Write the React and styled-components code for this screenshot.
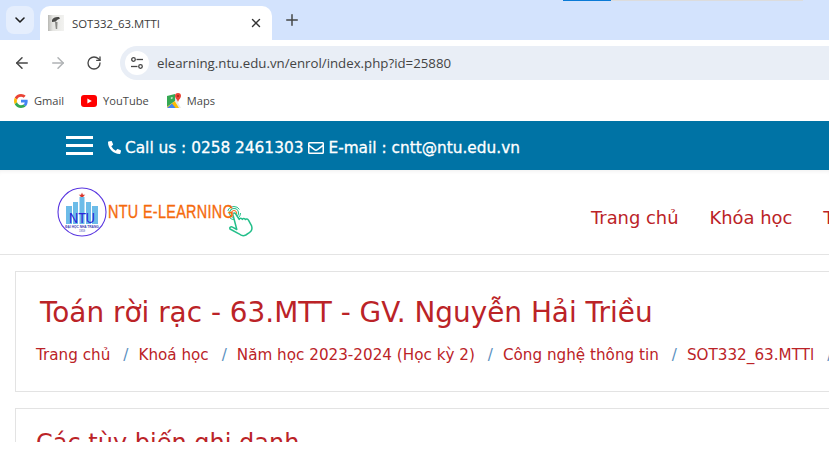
import React from 'react'
import styled, { createGlobalStyle } from 'styled-components'
import { ChevronDown, X, Plus, ArrowLeft, ArrowRight, RotateCw } from 'lucide-react'
import { FaPhoneAlt, FaRegEnvelope } from 'react-icons/fa'

const Global = createGlobalStyle`
  html, body { margin: 0; padding: 0; background: #fff; }
  * { box-sizing: border-box; }
`

const Screen = styled.div`
  width: 829px;
  height: 460px;
  overflow: hidden;
  background: #fff;
  display: flex;
  flex-direction: column;
  font-family: "Open Sans", "Noto Sans", sans-serif;
`

const TabStrip = styled.div`
  position: relative;
  height: 40px;
  flex: none;
  background: #d3e3fd;
  display: flex;
  align-items: flex-end;
  padding-left: 6px;
`
const Loading = styled.div`
  position: absolute;
  top: 0;
  left: 563px;
  width: 240px;
  height: 1px;
  background: linear-gradient(to right, #0a7ad6 48px, #dcdcdc 48px);
`
const TabSearch = styled.div`
  width: 28px;
  height: 28px;
  margin: 0 6px 6px 0;
  border-radius: 8px;
  background: #e5eefd;
  color: #1f1f1f;
  display: flex;
  align-items: center;
  justify-content: center;
`
const Tab = styled.div`
  width: 232px;
  height: 34px;
  background: #fff;
  border-radius: 10px 10px 0 0;
  display: flex;
  align-items: center;
  padding: 0 9px 0 8px;
  font-size: 11.4px;
  color: #3c3c3c;
`
const TabTitle = styled.span`
  flex: 1;
  margin-left: 8px;
`
const NewTab = styled.div`
  width: 28px;
  height: 28px;
  margin: 0 0 6px 6px;
  color: #444746;
  display: flex;
  align-items: center;
  justify-content: center;
`

const Toolbar = styled.div`
  height: 46px;
  flex: none;
  display: flex;
  align-items: center;
  padding-left: 8px;
  background: #fff;
  border-radius: 10px 0 0 0;
`
const NavButton = styled.div`
  width: 28px;
  height: 28px;
  margin-right: 8px;
  display: flex;
  align-items: center;
  justify-content: center;
  color: ${p => (p.$off ? '#b0b3b5' : '#474747')};
`
const Omnibox = styled.div`
  flex: 1;
  height: 34px;
  margin-left: 4px;
  background: #e9eef6;
  border-radius: 17px 0 0 17px;
  display: flex;
  align-items: center;
  padding-left: 5px;
  font-size: 13.25px;
  color: #444;
`
const Tune = styled.div`
  width: 24px;
  height: 24px;
  margin-right: 8px;
  border-radius: 50%;
  background: #fff;
  display: flex;
  align-items: center;
  justify-content: center;
`

const Bookmarks = styled.div`
  height: 35px;
  flex: none;
  display: flex;
  align-items: center;
  gap: 17px;
  padding: 0 0 6px 14px;
  font-size: 11.1px;
  color: #474747;
`
const Bookmark = styled.div`
  display: flex;
  align-items: center;
  gap: ${p => p.$gap || 6}px;
`

const Viewport = styled.div`
  height: 321px;
  flex: none;
  overflow: hidden;
  font-family: "DejaVu Sans", Verdana, sans-serif;
`
const TopBar = styled.div`
  height: 49px;
  background: #0073a5;
  display: flex;
  align-items: center;
  padding: 4px 0 0 66px;
  color: #fff;
  font-size: 15.35px;
  -webkit-text-stroke: 0.3px #fff;
`
const Burger = styled.div`
  width: 27px;
  height: 19px;
  margin: -4px 15px 0 0;
  display: flex;
  flex-direction: column;
  justify-content: space-between;
  span { display: block; height: 3px; background: #fff; }
`
const Contact = styled.span`
  display: inline-flex;
  align-items: center;
  gap: 4px;
  margin-right: 5px;
  white-space: nowrap;
  svg { flex: none; }
`

const NavBar = styled.div`
  height: 85px;
  display: flex;
  align-items: center;
  padding: 0 0 0 57px;
  border-bottom: 1px solid #e4e4e4;
  box-shadow: inset 0 4px 4px -3px rgba(0,0,0,0.07);
  overflow: hidden;
`
const Logo = styled.div`
  display: flex;
  align-items: center;
  width: 534px;
  flex: none;
`
const LogoText = styled.span`
  font-family: "Liberation Sans", sans-serif;
  font-size: 18px;
  color: #f56a0c;
  -webkit-text-stroke: 0.35px #f56a0c;
  letter-spacing: 0.4px;
  margin: 0 0 0 1px;
  white-space: nowrap;
  transform: scaleX(0.8);
  transform-origin: left center;
  width: 125px;
`
const Hand = styled.svg`
  margin: 20px 0 0 -6px;
`
const Menu = styled.div`
  display: flex;
  gap: 31px;
  margin-top: 10px;
`
const MenuItem = styled.span`
  font-size: 17.9px;
  color: #bb2327;
  white-space: nowrap;
`

const Card = styled.div`
  margin: 16px -40px 0 15px;
  border: 1px solid #e3e3e3;
  padding: ${p => p.$pad};
  height: ${p => p.$h};
`
const Title = styled.h1`
  margin: 0 0 0 4px;
  font-size: 27.9px;
  line-height: 32px;
  font-weight: 400;
  color: #bb2327;
  white-space: nowrap;
`
const Crumbs = styled.div`
  display: flex;
  margin-top: 16px;
  font-size: 15.2px;
  line-height: 20px;
  color: #bb2327;
  white-space: nowrap;
`
const Sep = styled.span`
  color: #5b8fc0;
  margin: 0 10px 0 13px;
`
const Subtitle = styled.h2`
  margin: 0;
  font-size: 24px;
  line-height: 28px;
  font-weight: 400;
  color: #bb2327;
  white-space: nowrap;
`

const crumbs = ['Trang chủ', 'Khoá học', 'Năm học 2023-2024 (Học kỳ 2)', 'Công nghệ thông tin', 'SOT332_63.MTTl', 'Ghi danh']

const Favicon = () => (
  <svg width="16" height="16" viewBox="0 0 16 16">
    <defs>
      <linearGradient id="fav" x1="0" x2="1" y1="0" y2="0">
        <stop offset="0" stopColor="#b8b8b4" />
        <stop offset="0.3" stopColor="#e6e6e3" />
        <stop offset="1" stopColor="#f2f2f0" />
      </linearGradient>
    </defs>
    <rect width="16" height="16" fill="url(#fav)" />
    <path d="M4 5c1-2.500 4-3.500 7-3l1 1.500-3 1.500-1 1.500-4 .5z" fill="#4a4a48" />
    <path d="M7 7h2.500l-.3 7H7.800z" fill="#8a8a86" />
  </svg>
)

const TuneIcon = () => (
  <svg width="14" height="14" viewBox="0 0 14 14" fill="none" stroke="#474747" strokeWidth="1.3">
    <circle cx="3.500" cy="3.500" r="1.800" />
    <path d="M6.500 3.500H13" />
    <circle cx="10.500" cy="10.500" r="1.800" />
    <path d="M1 10.500h6.500" />
  </svg>
)

const GoogleIcon = () => (
  <svg width="14" height="14" viewBox="0 0 48 48">
    <path fill="#EA4335" d="M24 9.500c3.500 0 6.700 1.300 9.100 3.500l6.800-6.800C35.800 2.400 30.300 0 24 0 14.600 0 6.500 5.400 2.600 13.200l7.900 6.100C12.400 13.600 17.700 9.500 24 9.500z" />
    <path fill="#4285F4" d="M46.900 24.500c0-1.600-.1-3.100-.4-4.500H24v9h12.900c-.6 3-2.200 5.500-4.700 7.200l7.600 5.900c4.400-4.100 7.100-10.200 7.100-17.600z" />
    <path fill="#FBBC05" d="M10.500 28.700c-.5-1.500-.8-3-.8-4.700s.3-3.200.8-4.700l-7.900-6.100C.9 16.500 0 20.100 0 24s.9 7.500 2.600 10.800l7.900-6.100z" />
    <path fill="#34A853" d="M24 48c6.500 0 11.900-2.100 15.900-5.900l-7.600-5.900c-2.100 1.400-4.900 2.300-8.300 2.300-6.300 0-11.600-4.200-13.500-9.800l-7.900 6.100C6.500 42.600 14.600 48 24 48z" />
  </svg>
)

const YoutubeIcon = () => (
  <svg width="16" height="12" viewBox="0 0 16 12">
    <rect width="16" height="12" rx="3" fill="#f00" />
    <path d="M6.400 3.400v5.200L10.800 6z" fill="#fff" />
  </svg>
)

const MapsIcon = () => (
  <svg width="16" height="16" viewBox="0 0 16 16">
    <path d="M1 3 9 1v7l-8 6z" fill="#35a853" />
    <path d="M4.500 5 6 3.800 7 5 5.500 6.200z" fill="#fff" opacity="0.7" />
    <path d="M9 1h3v7H9z" fill="#dfe3e6" />
    <path d="M1 14 9 8l5 7H2z" fill="#fbbc05" />
    <path d="M1 15 6 10.500 9.500 15z" fill="#4285f4" />
    <path d="M9 8.500l2-1 4 7.500h-2z" fill="#e8e8e8" />
    <path d="M12 0a3 3 0 0 1 3 3c0 2-2 3-3 6-1-3-3-4-3-6a3 3 0 0 1 3-3z" fill="#ea4335" />
    <circle cx="12" cy="3" r="1" fill="#a52714" />
  </svg>
)

const NtuLogo = () => (
  <svg width="50" height="50" viewBox="0 0 50 50">
    <circle cx="25" cy="25" r="24" fill="#fff" stroke="#5a37e0" strokeWidth="1.100" />
    <path d="M25 5.500l.9 2.300 2.400 0-1.900 1.500.7 2.300-2.100-1.400-2.100 1.400.7-2.300-1.900-1.500 2.400 0z" fill="#d8342a" />
    <rect x="9" y="19" width="6" height="18" fill="#6cbce8" />
    <rect x="16" y="15" width="5" height="22" fill="#6cbce8" />
    <rect x="22.500" y="10" width="5" height="27" fill="#6cbce8" />
    <rect x="29" y="15" width="5" height="22" fill="#6cbce8" />
    <rect x="35" y="19" width="6" height="18" fill="#6cbce8" />
    <text x="12" y="35.500" textLength="26" lengthAdjust="spacingAndGlyphs" fontFamily="Liberation Sans" fontSize="15.500" fill="#2a22d8">NTU</text>
    <text x="25" y="40.500" textAnchor="middle" fontFamily="Liberation Sans" fontSize="3.200" fontWeight="700" fill="#3a3ab0">ĐẠI HỌC NHA TRANG</text>
    <text x="25" y="45" textAnchor="middle" fontFamily="Liberation Sans" fontSize="2.800" fill="#3a3ab0">1959</text>
  </svg>
)

const HandIcon = () => (
  <Hand width="30" height="32" viewBox="0 0 30 32" fill="none">
    <circle cx="7" cy="7" r="2.500" stroke="#f56a0c" strokeWidth="1" />
    <circle cx="7" cy="7" r="4.500" stroke="#23bf8a" strokeWidth="1.100" />
    <circle cx="7" cy="7" r="6.500" stroke="#23bf8a" strokeWidth="1" strokeDasharray="14 8" />
    <path d="M6 9c-.8-1.800 1.600-2.800 2.600-1.200l3.600 5.600c.3-1.500 2.500-1.500 3.200 0 .3-1.300 2.500-1.200 3 .2.600-1 2.700-.7 3.200.8l3 5.500c1 3 .2 5-2.300 6.800l-3.500 2.300c-2.500 1.200-5 .5-6.800-1.200L3 23c-1-1.600 1-3 2.500-1.800l4.300 2.300z" fill="#fff" stroke="#23bf8a" strokeWidth="1.500" strokeLinejoin="round" />
  </Hand>
)

export default function App() {
  return (
    <Screen>
      <Global />
      <TabStrip>
        <Loading />
        <TabSearch><ChevronDown size={16} strokeWidth={2.4} /></TabSearch>
        <Tab>
          <Favicon />
          <TabTitle>SOT332_63.MTTI</TabTitle>
          <X size={14} strokeWidth={2.4} color="#333" />
        </Tab>
        <NewTab><Plus size={18} strokeWidth={2} /></NewTab>
      </TabStrip>
      <Toolbar>
        <NavButton><ArrowLeft size={18} strokeWidth={2} /></NavButton>
        <NavButton $off><ArrowRight size={18} strokeWidth={2} /></NavButton>
        <NavButton><RotateCw size={16} strokeWidth={2} /></NavButton>
        <Omnibox>
          <Tune><TuneIcon /></Tune>
          elearning.ntu.edu.vn/enrol/index.php?id=25880
        </Omnibox>
      </Toolbar>
      <Bookmarks>
        <Bookmark><GoogleIcon />Gmail</Bookmark>
        <Bookmark><YoutubeIcon />YouTube</Bookmark>
        <Bookmark $gap={5}><MapsIcon />Maps</Bookmark>
      </Bookmarks>
      <Viewport>
        <TopBar>
          <Burger><span /><span /><span /></Burger>
          <Contact><FaPhoneAlt size={13} />Call us : 0258 2461303</Contact>
          <Contact><FaRegEnvelope size={16} />E-mail : cntt@ntu.edu.vn</Contact>
        </TopBar>
        <NavBar>
          <Logo>
            <NtuLogo />
            <LogoText>NTU E-LEARNING</LogoText>
            <HandIcon />
          </Logo>
          <Menu>
            <MenuItem>Trang chủ</MenuItem>
            <MenuItem>Khóa học</MenuItem>
            <MenuItem>Tin tức</MenuItem>
          </Menu>
        </NavBar>
        <Card $pad="25px 20px 0 20px" $h="121px">
          <Title>Toán rời rạc - 63.MTT - GV. Nguyễn Hải Triều</Title>
          <Crumbs>
            {crumbs.map((c, i) => (
              <React.Fragment key={c}>
                {i > 0 && <Sep>/</Sep>}
                <span>{c}</span>
              </React.Fragment>
            ))}
          </Crumbs>
        </Card>
        <Card $pad="20px 20px 0 20px" $h="120px">
          <Subtitle>Các tùy biến ghi danh</Subtitle>
        </Card>
      </Viewport>
    </Screen>
  )
}
